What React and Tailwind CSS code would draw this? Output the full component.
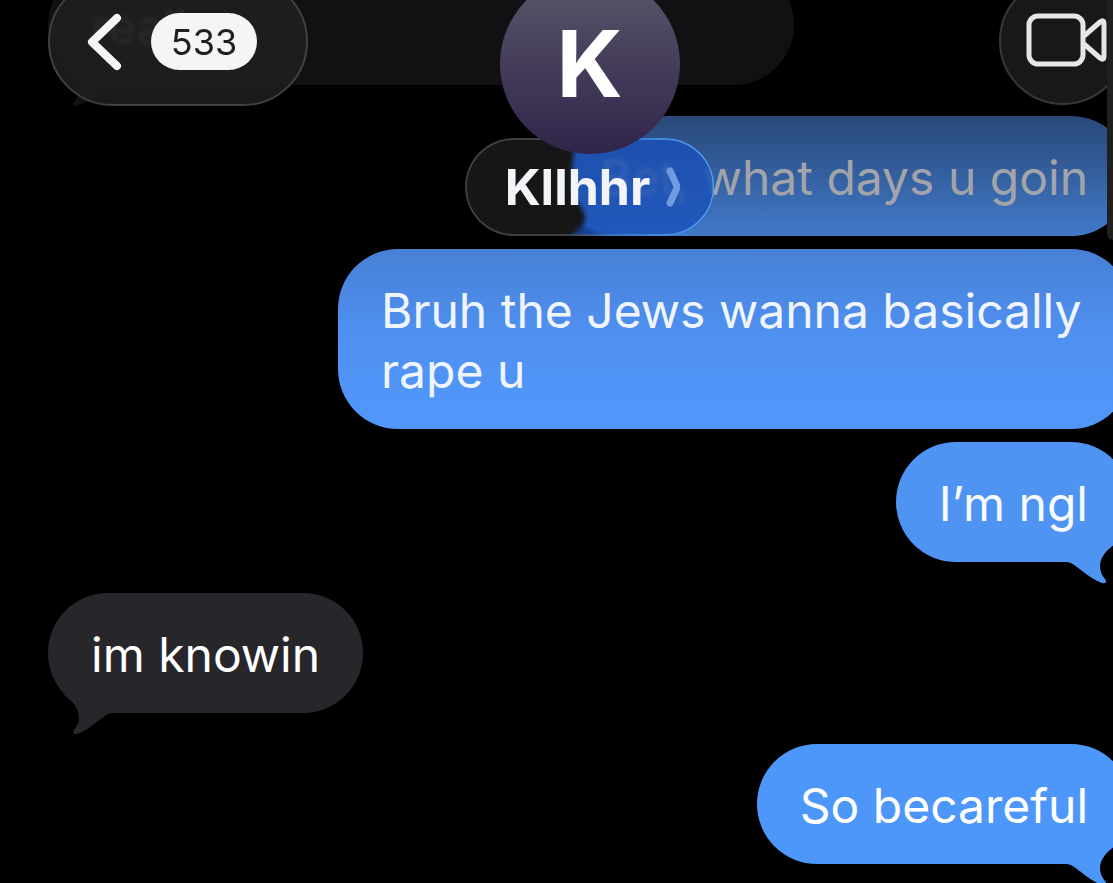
import React from 'react';
import clsx from 'clsx';

const messages = [
  { id: 1, from: 'them', text: 'really', tail: true, tone: 'ghost' },
  { id: 2, from: 'me', text: 'Bet, what days u goin', tone: 'dim' },
  { id: 3, from: 'me', text: 'Bruh the Jews wanna basically rape u', tone: 'soft' },
  { id: 4, from: 'me', text: 'I’m ngl', tail: true, tone: 'blue' },
  { id: 5, from: 'them', text: 'im knowin', tail: true, tone: 'gray' },
  { id: 6, from: 'me', text: 'So becareful', tail: true, tone: 'bright' },
];

const tones = {
  ghost: 'w-[746px] bg-[#111113] text-[#6a6a6c]',
  dim: 'bg-linear-to-b from-[#284878] to-[#417aca] text-[#a3a3aa]',
  soft: 'bg-linear-to-b from-[#4780d5] via-[#4f91f3] to-[#5197fa] text-[#f0f5fd]',
  blue: 'bg-[#4f93f3] text-[#f7faff]',
  gray: 'bg-[#27262b] text-white',
  bright: 'bg-[#4e97fa] text-white',
};

const tails = {
  ghost: 'text-[#111113]',
  blue: 'text-[#4f93f3]',
  gray: 'text-[#27262b]',
  bright: 'text-[#4e97fa]',
};

function Tail({ mine, tone }) {
  return (
    <svg
      viewBox="0 0 81 55"
      aria-hidden="true"
      className={clsx(
        'absolute top-[88px] h-[55px] w-[81px]',
        mine ? 'right-0' : 'left-0 -scale-x-100',
        tails[tone]
      )}
    >
      <path
        fill="currentColor"
        d="M0 32H16C22 32 25 36 31 40C37 45 44 50 52 53C56 54 57 51 55 49C48 41 46 27 65 14L50 0H0Z"
      />
    </svg>
  );
}

function Message({ message }) {
  const mine = message.from === 'me';
  return (
    <li
      className={clsx(
        'relative max-w-[793px] rounded-[60px] px-[43px] pt-8 pb-7',
        mine ? 'self-end' : 'self-start',
        message.tail ? 'mb-[31px]' : 'mb-[13px]',
        tones[message.tone]
      )}
    >
      {message.tail && <Tail mine={mine} tone={message.tone} />}
      <p className="relative">{message.text}</p>
    </li>
  );
}

function ContactPill() {
  return (
    <button
      type="button"
      className="relative -mt-4 flex h-[98px] items-center gap-4 overflow-hidden rounded-full pr-8 pl-10 text-[50px] font-bold text-[#f3f4f8] backdrop-blur-[2px]"
    >
      {/* glass tint, with the bubble behind bleeding through on the right */}
      <svg
        viewBox="0 0 249 98"
        preserveAspectRatio="none"
        aria-hidden="true"
        className="absolute inset-0 size-full"
      >
        <defs>
          <filter id="soften">
            <feGaussianBlur stdDeviation="2" />
          </filter>
          <linearGradient id="rim">
            <stop offset="0.4" stopColor="#3f3f41" />
            <stop offset="0.6" stopColor="#3774c8" />
            <stop offset="1" stopColor="#4da3f5" />
          </linearGradient>
        </defs>
        <path fill="#1a50b8" fillOpacity="0.8" d="M100 0H249V98H90Z" />
        <path
          fill="#181818"
          filter="url(#soften)"
          d="M-10 -10H112C108 10 106 32 107 48C109 64 119 70 120 80C118 90 108 94 98 108H-10Z"
        />
        <rect x="1" y="1" width="247" height="96" rx="48" fill="none" stroke="url(#rim)" strokeWidth="2" />
      </svg>
      <span className="relative">Kllhhr</span>
      <svg viewBox="0 0 16 40" aria-hidden="true" className="relative h-10 w-4">
        <path
          d="M4 4L10 17Q11.500 20 10 23L4 36"
          fill="none"
          stroke="#6f9ce0"
          strokeWidth="7"
          strokeLinecap="round"
        />
      </svg>
    </button>
  );
}

function Header() {
  return (
    <header className="absolute inset-x-0 -top-[26px] grid grid-cols-[1fr_auto_1fr] items-start">
      <button
        type="button"
        aria-label="Back, 533 unread"
        className="mt-[3px] flex h-[129px] w-[260px] items-center gap-[29px] rounded-full border-2 border-[#414143] bg-[#202022]/85 pl-[37px] backdrop-blur-[2px]"
      >
        <svg viewBox="0 0 35 58" aria-hidden="true" className="h-[58px] w-[35px]">
          <path
            d="M30 5L5 29L30 53"
            fill="none"
            stroke="#f5f5f5"
            strokeWidth="8"
            strokeLinecap="round"
            strokeLinejoin="round"
          />
        </svg>
        <span className="flex h-[57px] w-[106px] items-center justify-center rounded-full bg-[#f5f5f6] text-4xl text-[#1f1f21]">
          533
        </span>
      </button>

      <div className="flex flex-col items-center">
        <div className="relative z-10 flex size-[180px] items-center justify-center rounded-full bg-linear-to-b from-[#5b576a] to-[#31244a] text-[92px] font-bold text-white">
          K
        </div>
        <ContactPill />
      </div>

      <button
        type="button"
        aria-label="Video call"
        className="mt-[3px] mr-1 flex size-32 justify-self-end rounded-full border-2 border-[#373739] bg-[#181818] pt-[34px] pl-[25px]"
      >
        <svg viewBox="0 0 84 56" aria-hidden="true" className="h-14 w-[84px] shrink-0">
          <g fill="none" stroke="#e6e6e6" strokeWidth="5" strokeLinejoin="round">
            <rect x="3" y="3" width="54" height="48" rx="9" />
            <path d="M58 23L74 9Q78 6 78 11V43Q78 48 74 45L58 31" />
          </g>
        </svg>
      </button>
    </header>
  );
}

export default function App() {
  return (
    <main className="relative min-h-screen overflow-hidden bg-black font-['Inter',sans-serif]">
      <div className="relative -mr-[18px] ml-12 flow-root">
        <ol className="-mt-[35px] flex flex-col text-5xl leading-[60px]">
          {messages.map((m) => (
            <Message key={m.id} message={m} />
          ))}
        </ol>
        <Header />
      </div>
      <div className="absolute top-0 right-0 h-60 w-1.5 rounded-bl-full bg-[#1f1f20]" />
    </main>
  );
}
